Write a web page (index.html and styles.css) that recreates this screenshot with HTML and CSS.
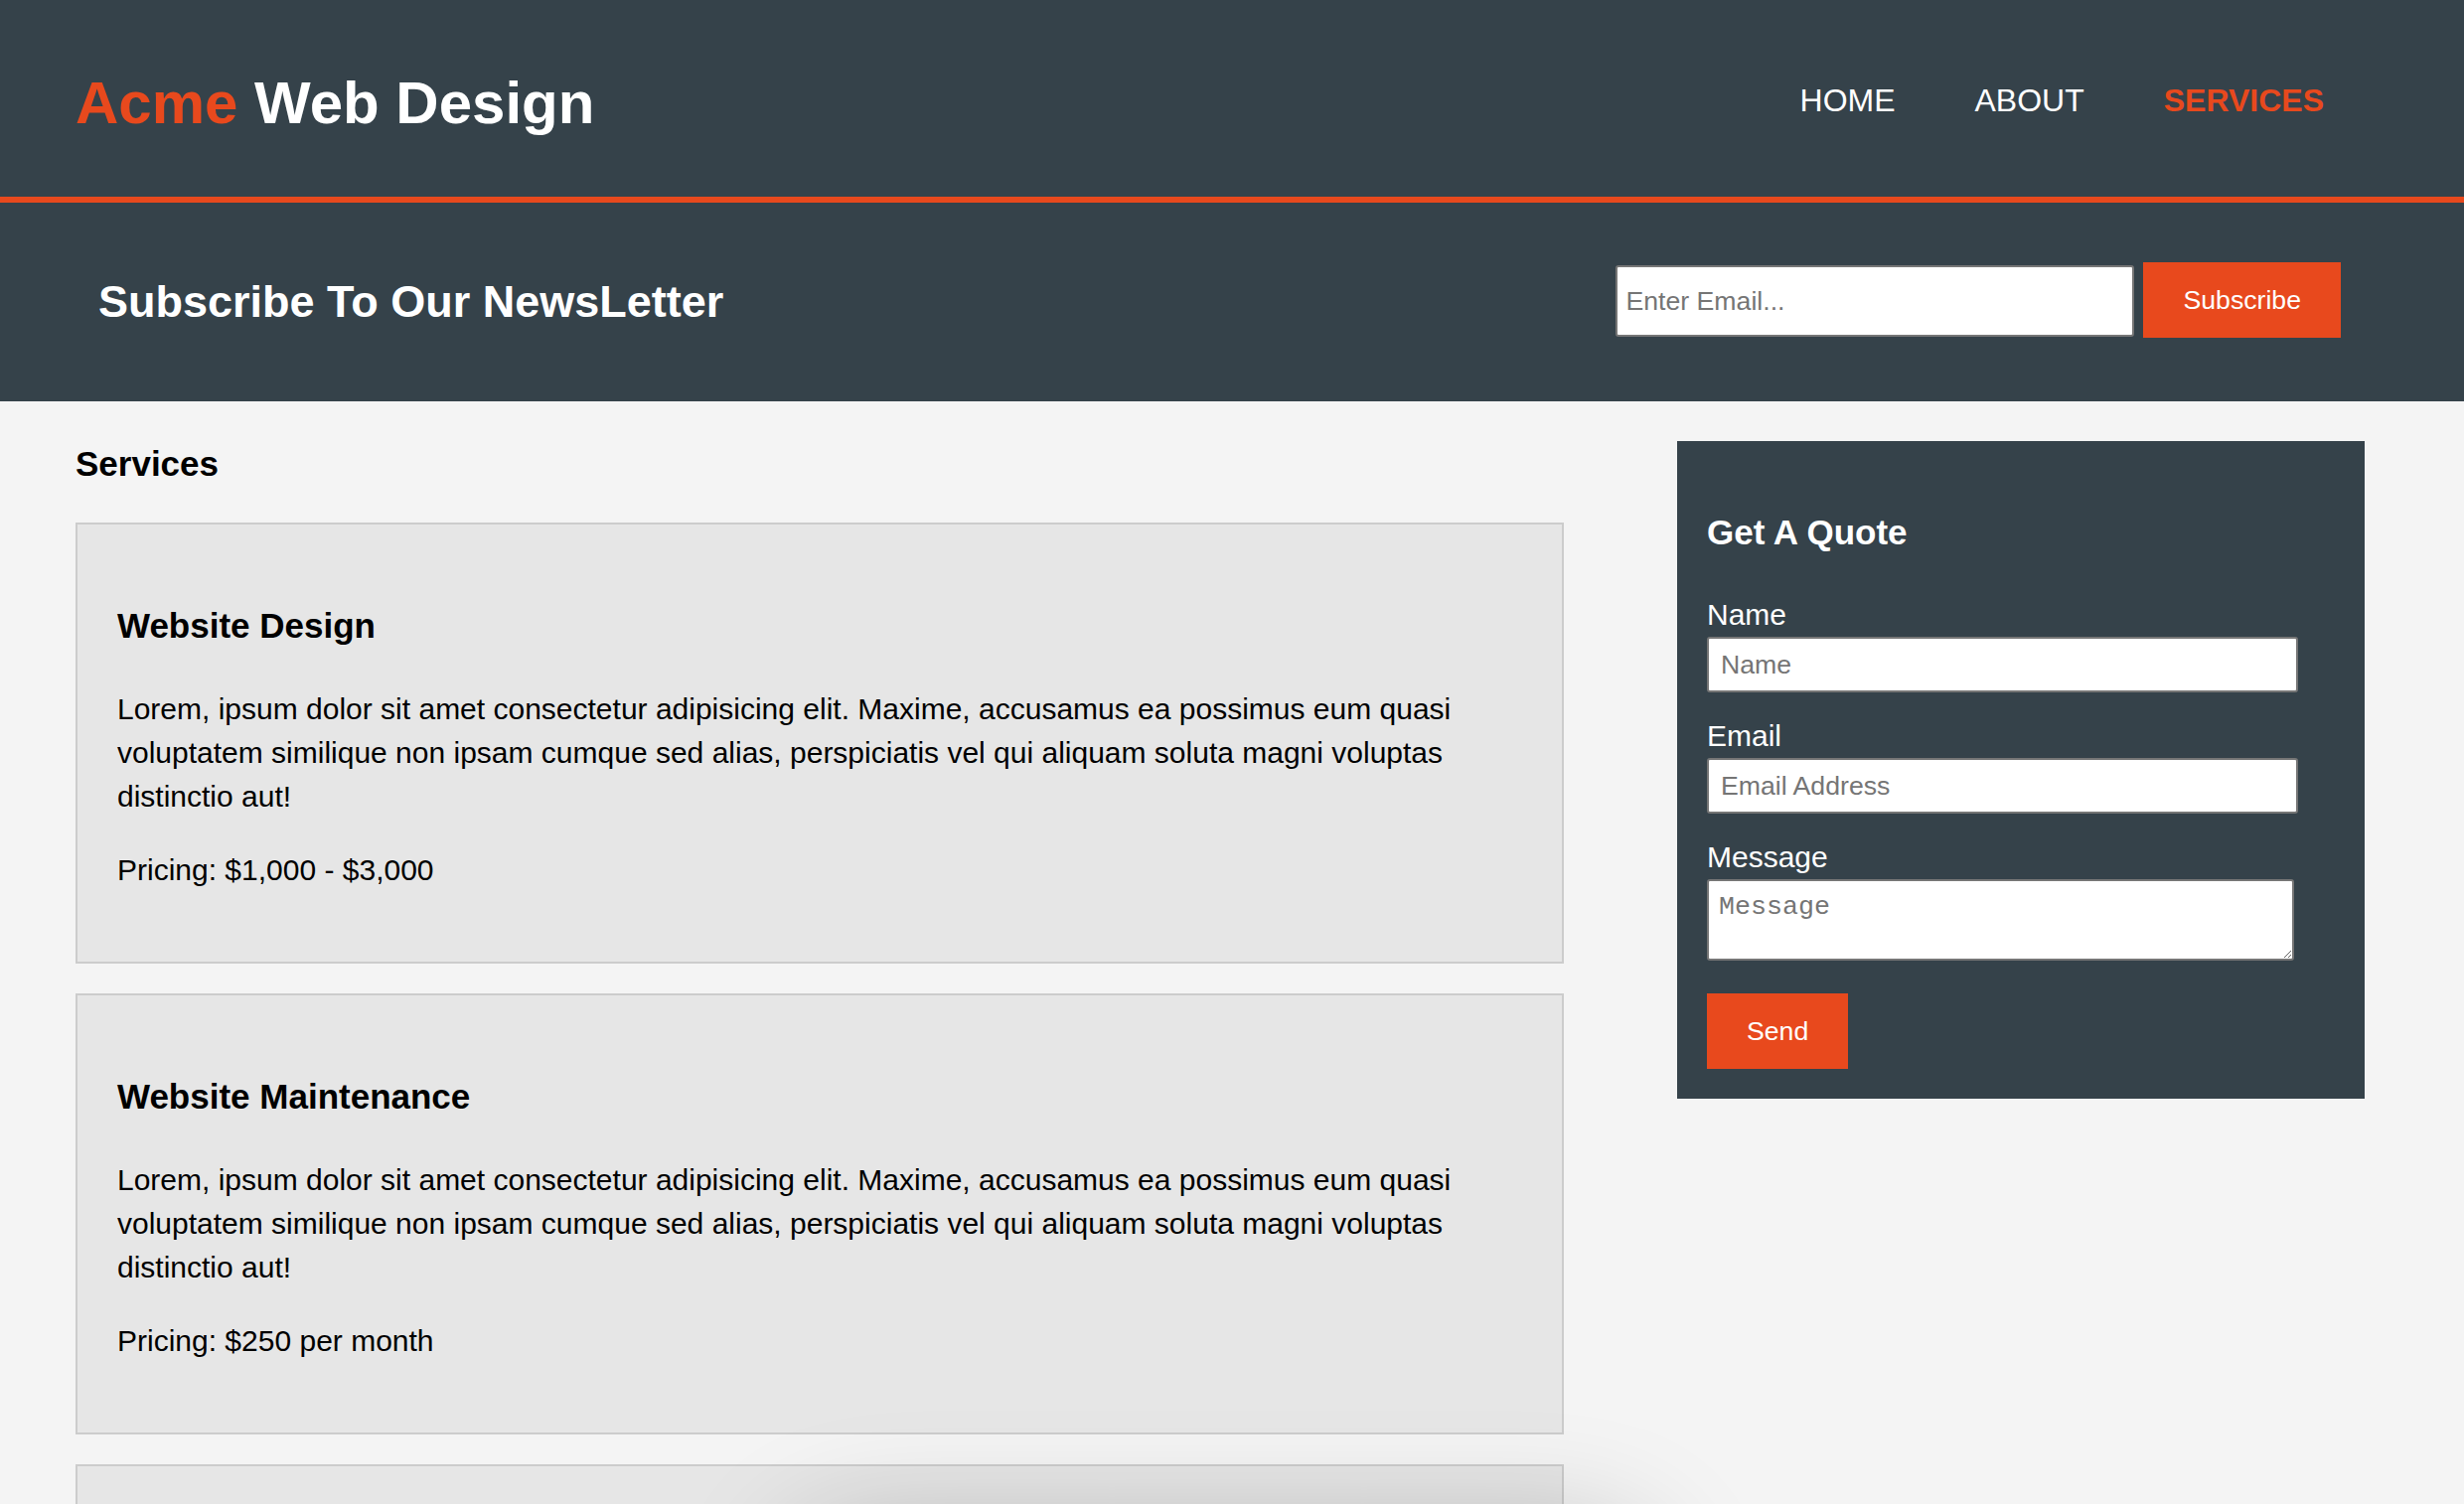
FILE: index.html
```html
<!DOCTYPE html>
<html lang="en">
<head>
<meta charset="utf-8">
<title>Acme Web Design | Services</title>
<link rel="stylesheet" href="styles.css">
</head>
<body>
<header class="site-header">
  <div class="branding">
    <h1 class="logo"><span class="highlight">Acme</span> Web Design</h1>
  </div>
  <nav class="main-nav">
    <ul>
      <li><a href="#">Home</a></li>
      <li><a href="#">About</a></li>
      <li class="current"><a href="#">Services</a></li>
    </ul>
  </nav>
</header>

<section class="newsletter">
  <h1 class="newsletter-title">Subscribe To Our NewsLetter</h1>
  <form class="newsletter-form">
    <input type="email" class="newsletter-input" placeholder="Enter Email...">
    <button type="submit" class="btn">Subscribe</button>
  </form>
</section>

<section class="content">
  <article class="main-col">
    <h3 class="page-title">Services</h3>
    <ul class="services">
      <li class="service">
        <h3>Website Design</h3>
        <p>Lorem, ipsum dolor sit amet consectetur adipisicing elit. Maxime, accusamus ea possimus eum quasi voluptatem similique non ipsam cumque sed alias, perspiciatis vel qui aliquam soluta magni voluptas distinctio aut!</p>
        <p>Pricing: $1,000 - $3,000</p>
      </li>
      <li class="service">
        <h3>Website Maintenance</h3>
        <p>Lorem, ipsum dolor sit amet consectetur adipisicing elit. Maxime, accusamus ea possimus eum quasi voluptatem similique non ipsam cumque sed alias, perspiciatis vel qui aliquam soluta magni voluptas distinctio aut!</p>
        <p>Pricing: $250 per month</p>
      </li>
      <li class="service service-more" aria-hidden="true"></li>
    </ul>
  </article>

  <aside class="sidebar">
    <div class="quote-box">
      <h3>Get A Quote</h3>
      <form class="quote-form">
        <label for="q-name">Name</label>
        <input id="q-name" type="text" class="quote-input" placeholder="Name">
        <label for="q-email">Email</label>
        <input id="q-email" type="email" class="quote-input" placeholder="Email Address">
        <label for="q-msg">Message</label>
        <textarea id="q-msg" class="quote-textarea" placeholder="Message"></textarea>
        <button type="submit" class="btn btn-send">Send</button>
      </form>
    </div>
  </aside>
</section>

<div class="bottom-shadow" aria-hidden="true"></div>
</body>
</html>
```

FILE: styles.css
```css
* {
  box-sizing: border-box;
}

html,
body {
  margin: 0;
  padding: 0;
}

body {
  font-family: "Liberation Sans", Arial, Helvetica, sans-serif;
  font-size: 30px;
  line-height: 44px;
  background: #f4f4f4;
  color: #000;
}

/* Header */
.site-header {
  background: #35424a;
  color: #fff;
  height: 204px;
  padding: 59px 101px 0 76px;
  border-bottom: 6px solid #e8491d;
  display: flex;
  justify-content: space-between;
  align-items: flex-start;
}

.logo {
  margin: 0;
  font-size: 60px;
  line-height: 90px;
  font-weight: bold;
}

.highlight {
  color: #e8491d;
}

.main-nav ul {
  list-style: none;
  margin: 18px 0 0;
  padding: 0;
  display: flex;
}

.main-nav li {
  padding: 0 40px;
  font-size: 32px;
  line-height: 48px;
}

.main-nav a {
  color: #fff;
  text-decoration: none;
  text-transform: uppercase;
}

.main-nav .current a {
  color: #e8491d;
  font-weight: bold;
}

/* Newsletter */
.newsletter {
  background: #35424a;
  color: #fff;
  height: 200px;
  padding: 0 124px 0 99px;
  display: flex;
  align-items: center;
  justify-content: space-between;
}

.newsletter-title {
  margin: 0;
  font-size: 45px;
  line-height: 68px;
  font-weight: bold;
}

.newsletter-form {
  display: flex;
  align-items: center;
  gap: 9px;
  margin: -4px 0 0;
}

.newsletter-input {
  width: 522px;
  height: 72px;
  margin: 2px 0 0;
  padding: 0 8px;
  border: 2px solid #767676;
  border-radius: 3px;
  background: #fff;
  font-family: "Liberation Sans", Arial, sans-serif;
  font-size: 26.67px;
  color: #000;
}

.btn {
  height: 76px;
  margin: 0;
  padding: 0 40px;
  border: 0;
  background: #e8491d;
  color: #fff;
  font-family: "Liberation Sans", Arial, sans-serif;
  font-size: 26.67px;
  cursor: pointer;
}

/* Content */
.content {
  display: flex;
  justify-content: space-between;
  align-items: flex-start;
  padding: 0 100px 0 76px;
}

.main-col {
  width: 1498px;
}

.page-title {
  font-size: 35px;
  line-height: 54px;
  margin: 36px 0 32px;
}

.services {
  list-style: none;
  margin: 0;
  padding: 0;
}

.service {
  background: #e6e6e6;
  border: 2px solid #ccc;
  padding: 40px;
  margin-bottom: 30px;
}

.service-more {
  height: 442px;
}

.service h3 {
  font-size: 35px;
  line-height: 54px;
  margin: 35px 0;
}

.service p {
  margin: 30px 0;
}

/* Sidebar */
.sidebar {
  width: 692px;
  margin-top: 40px;
}

.quote-box {
  background: #35424a;
  color: #fff;
  padding: 30px;
}

.quote-box h3 {
  font-size: 35px;
  line-height: 52px;
  margin: 36px 0 35px;
}

.quote-form label {
  display: block;
}

.quote-input {
  display: block;
  width: 595px;
  height: 56px;
  margin: 0 0 22px;
  padding: 0 12px;
  border: 2px solid #767676;
  border-radius: 3px;
  background: #fff;
  font-family: "Liberation Sans", Arial, sans-serif;
  font-size: 26.67px;
  color: #000;
}

.quote-textarea {
  display: block;
  width: 591px;
  height: 82px;
  margin: 0 0 33px;
  padding: 11px 10px 8px;
  border: 2px solid #767676;
  border-radius: 3px;
  background: #fff;
  font-family: "Liberation Mono", "Courier New", monospace;
  font-size: 26.67px;
  line-height: 30px;
  color: #000;
}

.newsletter-input::placeholder,
.quote-input::placeholder,
.quote-textarea::placeholder {
  color: #757575;
}

.btn-send {
  display: block;
}

/* soft shadow of an element just below the visible area */
.bottom-shadow {
  position: fixed;
  left: 790px;
  top: 1540px;
  width: 880px;
  height: 300px;
  border-radius: 80px;
  box-shadow: 0 0 120px 0 rgba(0, 0, 0, 0.22);
  pointer-events: none;
}
```
